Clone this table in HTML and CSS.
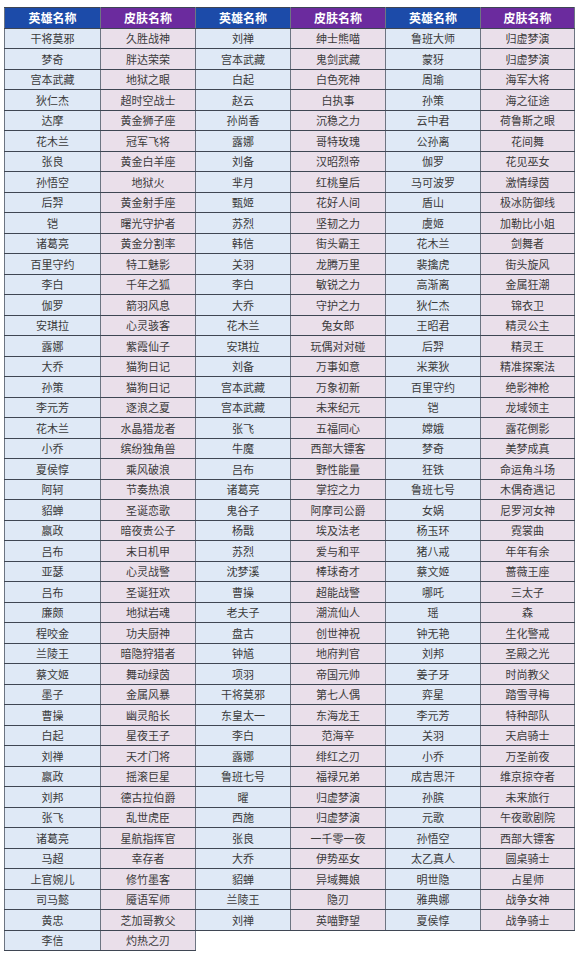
FILE: index.html
```html
<!DOCTYPE html>
<html lang="zh-CN">
<head>
<meta charset="utf-8">
<title>英雄皮肤列表</title>
<link rel="stylesheet" href="styles.css">
</head>
<body>
<table class="skins">
<colgroup><col class="c1"><col class="c2"><col class="c3"><col class="c4"><col class="c5"><col class="c6"></colgroup>
<thead>
<tr><th class="hero">英雄名称</th><th class="skin">皮肤名称</th><th class="hero">英雄名称</th><th class="skin">皮肤名称</th><th class="hero">英雄名称</th><th class="skin">皮肤名称</th></tr>
</thead>
<tbody>
<tr><td class="hero">干将莫邪</td><td class="skin">久胜战神</td><td class="hero">刘禅</td><td class="skin">绅士熊喵</td><td class="hero">鲁班大师</td><td class="skin">归虚梦演</td></tr>
<tr><td class="hero">梦奇</td><td class="skin">胖达荣荣</td><td class="hero">宫本武藏</td><td class="skin">鬼剑武藏</td><td class="hero">蒙犽</td><td class="skin">归虚梦演</td></tr>
<tr><td class="hero">宫本武藏</td><td class="skin">地狱之眼</td><td class="hero">白起</td><td class="skin">白色死神</td><td class="hero">周瑜</td><td class="skin">海军大将</td></tr>
<tr><td class="hero">狄仁杰</td><td class="skin">超时空战士</td><td class="hero">赵云</td><td class="skin">白执事</td><td class="hero">孙策</td><td class="skin">海之征途</td></tr>
<tr><td class="hero">达摩</td><td class="skin">黄金狮子座</td><td class="hero">孙尚香</td><td class="skin">沉稳之力</td><td class="hero">云中君</td><td class="skin">荷鲁斯之眼</td></tr>
<tr><td class="hero">花木兰</td><td class="skin">冠军飞将</td><td class="hero">露娜</td><td class="skin">哥特玫瑰</td><td class="hero">公孙离</td><td class="skin">花间舞</td></tr>
<tr><td class="hero">张良</td><td class="skin">黄金白羊座</td><td class="hero">刘备</td><td class="skin">汉昭烈帝</td><td class="hero">伽罗</td><td class="skin">花见巫女</td></tr>
<tr><td class="hero">孙悟空</td><td class="skin">地狱火</td><td class="hero">芈月</td><td class="skin">红桃皇后</td><td class="hero">马可波罗</td><td class="skin">激情绿茵</td></tr>
<tr><td class="hero">后羿</td><td class="skin">黄金射手座</td><td class="hero">甄姬</td><td class="skin">花好人间</td><td class="hero">盾山</td><td class="skin">极冰防御线</td></tr>
<tr><td class="hero">铠</td><td class="skin">曙光守护者</td><td class="hero">苏烈</td><td class="skin">坚韧之力</td><td class="hero">虞姬</td><td class="skin">加勒比小姐</td></tr>
<tr><td class="hero">诸葛亮</td><td class="skin">黄金分割率</td><td class="hero">韩信</td><td class="skin">街头霸王</td><td class="hero">花木兰</td><td class="skin">剑舞者</td></tr>
<tr><td class="hero">百里守约</td><td class="skin">特工魅影</td><td class="hero">关羽</td><td class="skin">龙腾万里</td><td class="hero">裴擒虎</td><td class="skin">街头旋风</td></tr>
<tr><td class="hero">李白</td><td class="skin">千年之狐</td><td class="hero">李白</td><td class="skin">敏锐之力</td><td class="hero">高渐离</td><td class="skin">金属狂潮</td></tr>
<tr><td class="hero">伽罗</td><td class="skin">箭羽风息</td><td class="hero">大乔</td><td class="skin">守护之力</td><td class="hero">狄仁杰</td><td class="skin">锦衣卫</td></tr>
<tr><td class="hero">安琪拉</td><td class="skin">心灵骇客</td><td class="hero">花木兰</td><td class="skin">兔女郎</td><td class="hero">王昭君</td><td class="skin">精灵公主</td></tr>
<tr><td class="hero">露娜</td><td class="skin">紫霞仙子</td><td class="hero">安琪拉</td><td class="skin">玩偶对对碰</td><td class="hero">后羿</td><td class="skin">精灵王</td></tr>
<tr><td class="hero">大乔</td><td class="skin">猫狗日记</td><td class="hero">刘备</td><td class="skin">万事如意</td><td class="hero">米莱狄</td><td class="skin">精准探案法</td></tr>
<tr><td class="hero">孙策</td><td class="skin">猫狗日记</td><td class="hero">宫本武藏</td><td class="skin">万象初新</td><td class="hero">百里守约</td><td class="skin">绝影神枪</td></tr>
<tr><td class="hero">李元芳</td><td class="skin">逐浪之夏</td><td class="hero">宫本武藏</td><td class="skin">未来纪元</td><td class="hero">铠</td><td class="skin">龙域领主</td></tr>
<tr><td class="hero">花木兰</td><td class="skin">水晶猎龙者</td><td class="hero">张飞</td><td class="skin">五福同心</td><td class="hero">嫦娥</td><td class="skin">露花倒影</td></tr>
<tr><td class="hero">小乔</td><td class="skin">缤纷独角兽</td><td class="hero">牛魔</td><td class="skin">西部大镖客</td><td class="hero">梦奇</td><td class="skin">美梦成真</td></tr>
<tr><td class="hero">夏侯惇</td><td class="skin">乘风破浪</td><td class="hero">吕布</td><td class="skin">野性能量</td><td class="hero">狂铁</td><td class="skin">命运角斗场</td></tr>
<tr><td class="hero">阿轲</td><td class="skin">节奏热浪</td><td class="hero">诸葛亮</td><td class="skin">掌控之力</td><td class="hero">鲁班七号</td><td class="skin">木偶奇遇记</td></tr>
<tr><td class="hero">貂蝉</td><td class="skin">圣诞恋歌</td><td class="hero">鬼谷子</td><td class="skin">阿摩司公爵</td><td class="hero">女娲</td><td class="skin">尼罗河女神</td></tr>
<tr><td class="hero">嬴政</td><td class="skin">暗夜贵公子</td><td class="hero">杨戬</td><td class="skin">埃及法老</td><td class="hero">杨玉环</td><td class="skin">霓裳曲</td></tr>
<tr><td class="hero">吕布</td><td class="skin">末日机甲</td><td class="hero">苏烈</td><td class="skin">爱与和平</td><td class="hero">猪八戒</td><td class="skin">年年有余</td></tr>
<tr><td class="hero">亚瑟</td><td class="skin">心灵战警</td><td class="hero">沈梦溪</td><td class="skin">棒球奇才</td><td class="hero">蔡文姬</td><td class="skin">蔷薇王座</td></tr>
<tr><td class="hero">吕布</td><td class="skin">圣诞狂欢</td><td class="hero">曹操</td><td class="skin">超能战警</td><td class="hero">哪吒</td><td class="skin">三太子</td></tr>
<tr><td class="hero">廉颇</td><td class="skin">地狱岩魂</td><td class="hero">老夫子</td><td class="skin">潮流仙人</td><td class="hero">瑶</td><td class="skin">森</td></tr>
<tr><td class="hero">程咬金</td><td class="skin">功夫厨神</td><td class="hero">盘古</td><td class="skin">创世神祝</td><td class="hero">钟无艳</td><td class="skin">生化警戒</td></tr>
<tr><td class="hero">兰陵王</td><td class="skin">暗隐狩猎者</td><td class="hero">钟馗</td><td class="skin">地府判官</td><td class="hero">刘邦</td><td class="skin">圣殿之光</td></tr>
<tr><td class="hero">蔡文姬</td><td class="skin">舞动绿茵</td><td class="hero">项羽</td><td class="skin">帝国元帅</td><td class="hero">姜子牙</td><td class="skin">时尚教父</td></tr>
<tr><td class="hero">墨子</td><td class="skin">金属风暴</td><td class="hero">干将莫邪</td><td class="skin">第七人偶</td><td class="hero">弈星</td><td class="skin">踏雪寻梅</td></tr>
<tr><td class="hero">曹操</td><td class="skin">幽灵船长</td><td class="hero">东皇太一</td><td class="skin">东海龙王</td><td class="hero">李元芳</td><td class="skin">特种部队</td></tr>
<tr><td class="hero">白起</td><td class="skin">星夜王子</td><td class="hero">李白</td><td class="skin">范海辛</td><td class="hero">关羽</td><td class="skin">天启骑士</td></tr>
<tr><td class="hero">刘禅</td><td class="skin">天才门将</td><td class="hero">露娜</td><td class="skin">绯红之刃</td><td class="hero">小乔</td><td class="skin">万圣前夜</td></tr>
<tr><td class="hero">嬴政</td><td class="skin">摇滚巨星</td><td class="hero">鲁班七号</td><td class="skin">福禄兄弟</td><td class="hero">成吉思汗</td><td class="skin">维京掠夺者</td></tr>
<tr><td class="hero">刘邦</td><td class="skin">德古拉伯爵</td><td class="hero">曜</td><td class="skin">归虚梦演</td><td class="hero">孙膑</td><td class="skin">未来旅行</td></tr>
<tr><td class="hero">张飞</td><td class="skin">乱世虎臣</td><td class="hero">西施</td><td class="skin">归虚梦演</td><td class="hero">元歌</td><td class="skin">午夜歌剧院</td></tr>
<tr><td class="hero">诸葛亮</td><td class="skin">星航指挥官</td><td class="hero">张良</td><td class="skin">一千零一夜</td><td class="hero">孙悟空</td><td class="skin">西部大镖客</td></tr>
<tr><td class="hero">马超</td><td class="skin">幸存者</td><td class="hero">大乔</td><td class="skin">伊势巫女</td><td class="hero">太乙真人</td><td class="skin">圆桌骑士</td></tr>
<tr><td class="hero">上官婉儿</td><td class="skin">修竹墨客</td><td class="hero">貂蝉</td><td class="skin">异域舞娘</td><td class="hero">明世隐</td><td class="skin">占星师</td></tr>
<tr><td class="hero">司马懿</td><td class="skin">魇语军师</td><td class="hero">兰陵王</td><td class="skin">隐刃</td><td class="hero">雅典娜</td><td class="skin">战争女神</td></tr>
<tr><td class="hero">黄忠</td><td class="skin">芝加哥教父</td><td class="hero">刘禅</td><td class="skin">英喵野望</td><td class="hero">夏侯惇</td><td class="skin">战争骑士</td></tr>
<tr><td class="hero">李信</td><td class="skin">灼热之刃</td></tr>
</tbody>
</table>
</body>
</html>
```

FILE: styles.css
```css
html, body {
  margin: 0;
  padding: 0;
  background: #ffffff;
}

body {
  padding: 7px 0 0 4px;
  font-family: "Noto Sans CJK SC", "Noto Sans", sans-serif;
}

.skins {
  border-collapse: collapse;
  table-layout: fixed;
  width: 570px;
}

.skins col.c1 { width: 96px; }
.skins col.c2 { width: 95px; }
.skins col.c3 { width: 95px; }
.skins col.c4 { width: 95px; }
.skins col.c5 { width: 95px; }
.skins col.c6 { width: 94px; }

.skins tr {
  height: 20.5px;
}

.skins th,
.skins td {
  padding: 0;
  text-align: center;
  vertical-align: middle;
  white-space: nowrap;
  border-top: 1px solid #3f4653;
  border-bottom: 1px solid #3f4653;
  border-left: 1px solid #6d7582;
  border-right: 1px solid #6d7582;
  line-height: 16px;
}

.skins th {
  color: #ffffff;
  font-size: 12px;
  font-weight: 700;
}

.skins th.hero { background: #1c4ba9; }
.skins th.skin { background: #6b2b9e; }

.skins td {
  color: #3a3a3a;
  font-size: 11px;
  font-weight: 400;
}

.skins td.hero { background: #dfe9f6; }
.skins td.skin { background: #eadfea; }
```
